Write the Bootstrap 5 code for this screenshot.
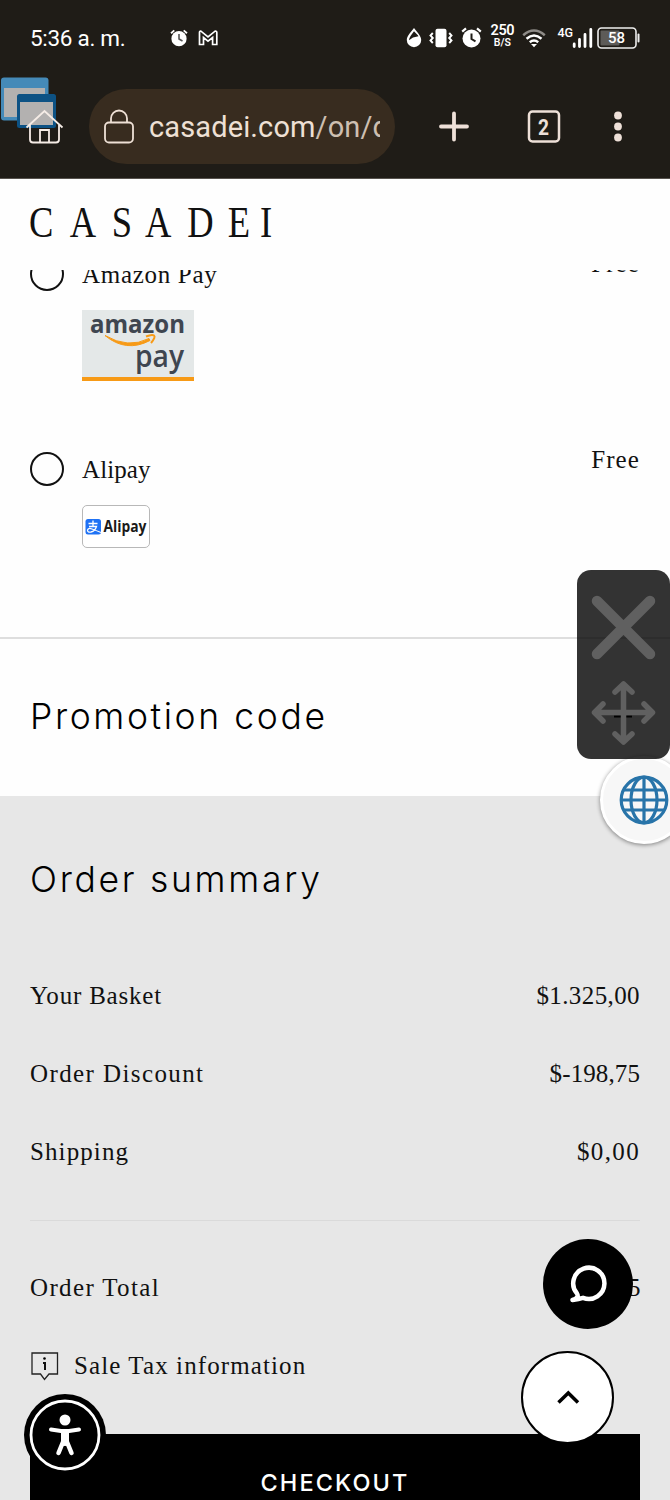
<!DOCTYPE html>
<html lang="en">
<head>
<meta charset="utf-8">
<meta name="viewport" content="width=device-width, initial-scale=1">
<title>Casadei checkout</title>
<link href="https://cdn.jsdelivr.net/npm/bootstrap@5.3.0/dist/css/bootstrap.min.css" rel="stylesheet">
<style>
body{width:670px;height:1500px;overflow:hidden;background:#fefefe;color:#111;font-family:"Liberation Serif",serif;font-size:25px;line-height:30px}
svg{display:block;flex:none}
.chrome{background:#1f1c17;color:#fff;font-family:Roboto,sans-serif;height:179px;border-bottom:1px solid #57534e}
.status{height:75px;padding:0 30px}
.clock{font-size:22.5px;width:140px;letter-spacing:-.3px}
.rate{width:24px;font-size:14.5px;line-height:13px;font-weight:600;letter-spacing:-.4px}
.rate small{display:block;font-size:10.5px;line-height:11px;letter-spacing:0}
.net{font-size:12.5px;line-height:14px;font-weight:500}
.tools{height:103px}
.url{margin-left:89px;width:306px;height:75px;border-radius:38px;background:#382c1f;margin-top:14px;padding-left:15px;color:#eee0d5;font-size:29px}
.url-text{width:231px;overflow:hidden;white-space:nowrap;margin-left:15px;letter-spacing:.12px;padding-top:1px}
.url-text span{color:#cdbfb1}
.site-head{height:91px}
.ship{height:367px;overflow:hidden}
.opt{padding:0 30px}
.ring{width:34px;height:34px;border:2px solid #111;border-radius:50%;margin-right:18px}
.amz{width:112px;height:71px;background:#e4e8e8;border-bottom:4px solid #f79a16}
.ali{width:68px;height:43px;border:1px solid #b8b8b8;border-radius:5px;background:#fff}
.promo{height:159px;border-top:2px solid #dedede;padding:0 30px 2px}
.title{font-family:Inter,sans-serif;font-weight:350;font-size:35.5px;line-height:44px;color:#000;margin:0;white-space:nowrap}
.summary{background:#e7e7e7;height:704px;padding:62px 30px 0}
.line{height:78px;white-space:nowrap}
.rule{height:1px;background:#dadada;margin:29px 0 28px}
.pay-btn{height:96px;background:#000;color:#fff;font:500 23.5px/98px Inter,sans-serif;letter-spacing:2.1px;text-align:center;margin-top:29px}
.t-promo{letter-spacing:2.6px}.t-sum{letter-spacing:2.7px}
.sn{letter-spacing:-.6px}.s0{letter-spacing:.1px}.s3{letter-spacing:.4px}.s5{letter-spacing:.8px}.s7{letter-spacing:.7px}.s10{letter-spacing:1.1px}.s12{letter-spacing:1.35px}.s14{letter-spacing:1.4px}
.float{position:absolute}
.panel{left:577px;top:570px;width:93px;height:189px;border-radius:14px;background:rgba(0,0,0,.8);z-index:3}
.globe{left:600px;top:756px;width:88px;height:88px;border-radius:50%;background:#f7f7f7;border:3px solid #fff;box-shadow:0 1px 4px rgba(0,0,0,.45);z-index:2}
.chat{left:543px;top:1239px;width:90px;height:90px;border-radius:50%;background:#000}
.totop{left:521px;top:1351px;width:93px;height:93px;border-radius:50%;background:#fff;border:2px solid #000}
.access{left:24px;top:1394px}
.wins{left:0;top:77px}
</style>
</head>
<body class="position-relative">
<header class="chrome">
  <div class="status d-flex align-items-center">
    <span class="clock">5:36 a. m.</span>
    <svg width="18" height="18" viewBox="0 0 18 18"><circle cx="9" cy="9.7" r="7.6" fill="#fff"/><path d="M1 4.2 4.3 1.4M17 4.2 13.700 1.400" stroke="#fff" stroke-width="1.800"/><path d="M9 5v5l3.500 2" fill="none" stroke="#555" stroke-width="1.600"/></svg>
    <svg width="20" height="16" viewBox="0 0 20 16" style="margin-left:10px"><path d="M1.500 14.500V2.500Q1.500 1 3 1.200L10 7 17 1.200Q18.800 1 18.800 2.500V14.500H14.600V7.500L10 11.200 5.500 7.500V14.500Z" fill="none" stroke="#fff" stroke-width="1.700"/></svg>
    <svg class="ms-auto" width="16" height="21" viewBox="0 0 16 21"><path d="M8 1C5 5 .8 9 .8 13a7.200 7.200 0 0 0 14.400 0C15.200 9 11 5 8 1Z" fill="#fff"/><path d="M8 4.200C5.500 7.500 3 10.500 3 13.200l4-2.700 5.500-1.200C11.500 7.500 10 6.500 8 4.200Z" fill="#1f1c17"/></svg>
    <svg width="24" height="20" viewBox="0 0 24 20" style="margin-left:7px"><rect x="6.500" y=".8" width="11" height="18.500" rx="2" fill="#fff"/><path d="M3.800 5 1.500 7.500 3.800 10 1.500 12.500 3.800 15M20.200 5l2.300 2.500L20.200 10l2.300 2.500-2.300 2.500" fill="none" stroke="#fff" stroke-width="1.900"/></svg>
    <svg width="21" height="21" viewBox="0 0 21 21" style="margin-left:8px"><circle cx="10.500" cy="11.500" r="9" fill="#fff"/><path d="M1.200 4.600 5 1.300M19.800 4.600 16 1.300" stroke="#fff" stroke-width="2.200"/><path d="M10.500 6.500v5.500l4 2.300" fill="none" stroke="#1f1c17" stroke-width="2"/></svg>
    <div class="rate text-center" style="margin-left:8px;margin-top:-3px">250<small>B/S</small></div>
    <svg width="24" height="20" viewBox="0 0 24 20" style="margin-left:8px"><g fill="none" stroke="#fff" stroke-width="2.500"><path d="M1.200 7.200Q12-2.200 22.800 7.200" stroke="#8e8b87"/><path d="M4.500 10.700Q12 4.300 19.500 10.700"/><path d="M7.800 14.200Q12 10.700 16.200 14.200"/></g><path d="M9 16h6l-3 3.200Z" fill="#fff"/></svg>
    <span class="net align-self-start" style="margin:26px 0 0 11px">4G</span>
    <svg width="21" height="21" viewBox="0 0 21 21" style="margin:0 4px 0 -1px"><path d="M2.200 17v2.500M7.500 12.500v7M13 7.500v12M18.800 2.300v17.200" stroke="#fff" stroke-width="2.800" stroke-linecap="round"/></svg>
    <svg width="43" height="22" viewBox="0 0 43 22"><rect x="1" y="1" width="38" height="20" rx="3.500" fill="none" stroke="#eee" stroke-width="1.600"/><rect x="3.500" y="3.500" width="19" height="15" rx="1" fill="#5d5b58"/><rect x="40.500" y="6.500" width="2" height="9" rx="1" fill="#eee"/><text x="19.500" y="15.500" font-family="Roboto" font-size="15" font-weight="500" fill="#fff" text-anchor="middle">58</text></svg>
  </div>
  <div class="tools d-flex align-items-start">
    <div class="url d-flex align-items-center">
      <svg width="30" height="36" viewBox="0 0 30 36"><rect x="1" y="13.500" width="28" height="20" rx="4" fill="none" stroke="#eee0d5" stroke-width="1.800"/><path d="M7 13.500V9.500a8 8 0 0 1 16 0v4" fill="none" stroke="#eee0d5" stroke-width="1.800"/></svg>
      <div class="url-text">casadei.com<span>/on/d</span></div>
    </div>
    <svg width="275" height="75" viewBox="395 90 275 75" style="margin-top:15px"><g fill="none" stroke="#eee0d8" stroke-linecap="round"><path d="M441 126.500h26M454 113.500v26" stroke-width="3.800"/><rect x="529" y="111.500" width="30" height="30" rx="3.500" stroke-width="2.500"/></g><text x="543.500" y="134.500" fill="#eee0d8" font-family="Roboto" font-size="22" font-weight="700" textLength="11" lengthAdjust="spacingAndGlyphs" text-anchor="middle">2</text><g fill="#eee0d8"><circle cx="618" cy="115.500" r="3.900"/><circle cx="618" cy="126.500" r="3.900"/><circle cx="618" cy="137.500" r="3.900"/></g></svg>
  </div>
</header>

<div class="site-head">
  <svg width="300" height="91" viewBox="0 179 300 91"><text transform="scale(.84 1)" x="34.500 83 133 172.500 223 271 309.500" y="237" font-family="Liberation Serif" font-size="43.500" fill="#111">CASADEI</text></svg>
</div>

<section class="ship">
  <div class="opt d-flex" style="margin-top:-13px">
    <div class="ring"></div>
    <div><div class="s7" style="padding-top:3px">Amazon Pay</div>
      <div class="amz" style="margin-top:20px"><svg width="112" height="67" viewBox="0 0 112 67"><g font-family="Open Sans" fill="#3f4650"><text x="8" y="23" font-size="25" font-weight="700" textLength="95" lengthAdjust="spacingAndGlyphs">amazon</text><text x="53" y="57" font-size="30" font-weight="600" textLength="49" lengthAdjust="spacingAndGlyphs">pay</text></g><path d="M23 25.500Q46 39 67 28.500l1 2Q44 43 23 25.500Z" fill="#f79a16" stroke="#f79a16"/><path d="M64 26.500Q70 24 72 25.500T69 33" fill="none" stroke="#f79a16" stroke-width="2"/></svg></div>
    </div>
    <span class="ms-auto s10" style="margin-top:-8px">Free</span>
  </div>
  <div class="opt d-flex" style="margin-top:71px">
    <div class="ring"></div>
    <div><div class="s0" style="padding-top:3px">Alipay</div>
      <div class="ali" style="margin-top:20px"><svg width="66" height="41" viewBox="0 0 66 41"><rect x="2.500" y="13" width="15.500" height="15.500" rx="2.500" fill="#1f72f5"/><path d="M5.500 17.500h9M10 14.500v6M6 20.500h7.500Q12 25 8 26 4.500 26.500 4.500 24.200 5 21.500 9 23T18 26.500" fill="none" stroke="#fff" stroke-width="1.300"/><text x="20.500" y="25.500" font-family="Open Sans" font-size="15.500" font-weight="700" fill="#1a1a1a" textLength="43" lengthAdjust="spacingAndGlyphs">Alipay</text></svg></div>
    </div>
    <span class="ms-auto s10" style="margin-top:-7px">Free</span>
  </div>
</section>

<section class="promo d-flex align-items-center justify-content-between">
  <h2 class="title t-promo">Promotion code</h2>
  <svg width="26" height="26" viewBox="0 0 26 26"><path d="M0 12.500h18M9.500 4v17" stroke="#000" stroke-width="2"/></svg>
</section>

<section class="summary">
  <h2 class="title t-sum">Order summary</h2>
  <div class="line d-flex align-items-center justify-content-between" style="margin-top:55px"><span class="s5">Your Basket</span><span class="s3">$1.325,00</span></div>
  <div class="line d-flex align-items-center justify-content-between"><span class="s14">Order Discount</span><span class="s0">$-198,75</span></div>
  <div class="line d-flex align-items-center justify-content-between"><span class="s10">Shipping</span><span class="s12">$0,00</span></div>
  <div class="rule"></div>
  <div class="line d-flex align-items-center justify-content-between"><span class="s12">Order Total</span><span class="sn">$1.126,25</span></div>
  <div class="line d-flex align-items-center"><svg width="30" height="30" viewBox="0 0 30 30"><path d="M2 2h25.500v21H19l-4.500 5.500L10.500 23H2Z" fill="none" stroke="#222" stroke-width="1.300"/><path d="M13 12h2v7" fill="none" stroke="#111" stroke-width="2"/><circle cx="14.500" cy="7.500" r="1.300"/></svg><span class="s10" style="margin-left:14px">Sale Tax information</span></div>
  <div class="pay-btn">CHECKOUT</div>
</section>

<svg class="float wins" width="66" height="70" viewBox="0 77 66 70"><rect x="1" y="77.500" width="47.500" height="43" rx="3" fill="#458ab8"/><rect x="4" y="88" width="41" height="29" fill="#b3b1b0"/><rect x="17" y="94" width="39" height="34" rx="2.500" fill="#0d5284"/><rect x="20" y="102" width="33" height="23" fill="#b3b1b0"/><g fill="none" stroke="#f5ece6" stroke-width="1.800"><path d="M26.500 127.500 44.500 111 62.500 127.500M30 125v14.500q0 3 3 3h23q3 0 3-3V125"/><path d="M40 142v-12h9v12"/></g></svg>

<div class="float globe"></div>
<svg class="float" width="52" height="52" viewBox="-26 -26 52 52" style="left:618px;top:774px;z-index:2"><g fill="none" stroke="#2874a9" stroke-width="3.200"><circle r="22.800"/><ellipse rx="13" ry="22.800"/><path d="M0-23V23M-23 0H23M-20.500-10H20.500M-20.500 10H20.500"/></g></svg>
<div class="float panel"><svg width="93" height="189" viewBox="577 570 93 189"><g fill="none" stroke="#606060" stroke-linecap="round" stroke-linejoin="round"><path d="M597 601l53 53M650 601l-53 53" stroke-width="10.500"/><path d="M595 712.500h57M623.500 684v57M615 692l8.500-8 8.500 8M615 734l8.500 8 8.500-8M603 704l-8.500 8.500 8.500 8.500M644 704l8.500 8.500-8.500 8.500" stroke-width="5.500"/></g></svg></div>
<div class="float chat"><svg width="90" height="90" viewBox="0 0 90 90"><path d="M29.500 61q7-2 4.500-6.500A15.600 15.600 0 1 1 40 58.800Q36 60 29.500 61Z" fill="none" stroke="#fff" stroke-width="4.500" stroke-linejoin="round"/></svg></div>
<div class="float totop"><svg width="89" height="88" viewBox="0 0 89 88"><path d="M35.500 49.500 45.300 40 55 49.500" fill="none" stroke="#000" stroke-width="3.500"/></svg></div>
<svg class="float access" width="82" height="82" viewBox="0 0 82 82"><circle cx="41" cy="41" r="41"/><circle cx="41" cy="41" r="34" fill="none" stroke="#fff" stroke-width="2.800"/><g fill="none" stroke="#fff" stroke-linecap="round" stroke-linejoin="round"><circle cx="41" cy="26" r="5.500" fill="#fff" stroke="none"/><path d="M27 35.500l10 1.500h8l10-1.500" stroke-width="4"/><path d="M41 39v9" stroke-width="8"/><path d="M39 48l-4.500 11M43 48l4.500 11" stroke-width="4.500"/></g></svg>
<script src="https://cdn.jsdelivr.net/npm/bootstrap@5.3.0/dist/js/bootstrap.bundle.min.js"></script>
</body>
</html>
